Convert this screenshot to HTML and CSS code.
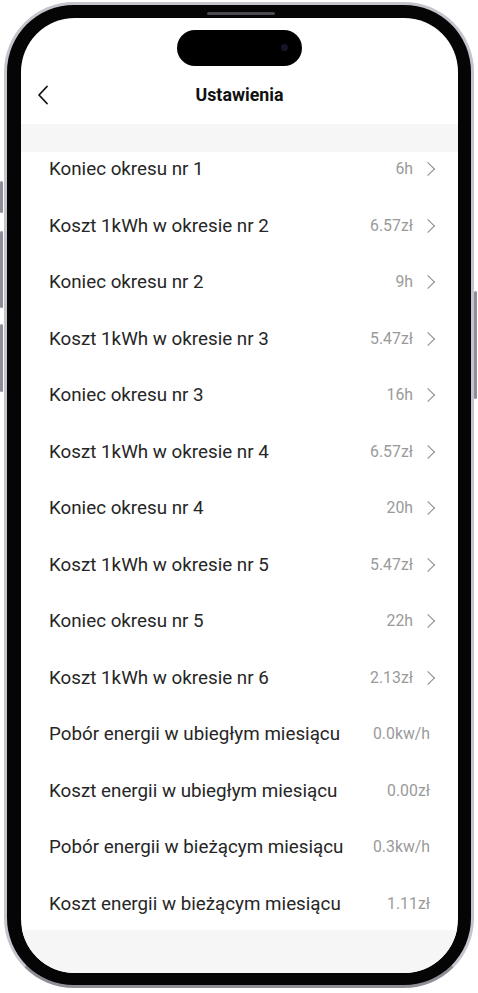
FILE: index.html
```html
<html>
<head>
  <meta name="viewport" content="width=device-width, initial-scale=1"/>
  <link rel="stylesheet" href="styles.css">
</head>
<body>
<div class="phone">
  <span class="btn btn-l1"></span>
  <span class="btn btn-l2"></span>
  <span class="btn btn-l3"></span>
  <span class="btn btn-r1"></span>
  <span class="speaker"></span>
  <div class="screen">
    <div class="top">
      <div class="island"><span class="cam"></span></div>
      <div class="nav">
        <svg class="back" width="12" height="20" viewBox="0 0 12 20">
          <path d="M10 1.5 L2 10 L10 18.5" fill="none" stroke="#111" stroke-width="1.8" stroke-linecap="round" stroke-linejoin="round"/>
        </svg>
        <h1>Ustawienia</h1>
      </div>
    </div>
    <div class="band"></div>
    <div class="list">
      <div class="row"><span class="label">Koniec okresu nr 1</span><span class="value">6h</span><span class="chev"></span></div>
      <div class="row"><span class="label">Koszt 1kWh w okresie nr 2</span><span class="value">6.57zł</span><span class="chev"></span></div>
      <div class="row"><span class="label">Koniec okresu nr 2</span><span class="value">9h</span><span class="chev"></span></div>
      <div class="row"><span class="label">Koszt 1kWh w okresie nr 3</span><span class="value">5.47zł</span><span class="chev"></span></div>
      <div class="row"><span class="label">Koniec okresu nr 3</span><span class="value">16h</span><span class="chev"></span></div>
      <div class="row"><span class="label">Koszt 1kWh w okresie nr 4</span><span class="value">6.57zł</span><span class="chev"></span></div>
      <div class="row"><span class="label">Koniec okresu nr 4</span><span class="value">20h</span><span class="chev"></span></div>
      <div class="row"><span class="label">Koszt 1kWh w okresie nr 5</span><span class="value">5.47zł</span><span class="chev"></span></div>
      <div class="row"><span class="label">Koniec okresu nr 5</span><span class="value">22h</span><span class="chev"></span></div>
      <div class="row"><span class="label">Koszt 1kWh w okresie nr 6</span><span class="value">2.13zł</span><span class="chev"></span></div>
      <div class="row"><span class="label">Pobór energii w ubiegłym miesiącu</span><span class="value plain">0.0kw/h</span></div>
      <div class="row"><span class="label">Koszt energii w ubiegłym miesiącu</span><span class="value plain">0.00zł</span></div>
      <div class="row"><span class="label">Pobór energii w bieżącym miesiącu</span><span class="value plain">0.3kw/h</span></div>
      <div class="row"><span class="label">Koszt energii w bieżącym miesiącu</span><span class="value plain">1.11zł</span></div>
    </div>
    <div class="footer"></div>
  </div>
</div>
</body>
</html>
```

FILE: styles.css
```css
body {
  margin: 0;
  background: #fff;
  font-family: 'Roboto', 'Noto Sans', sans-serif;
}

.phone {
  position: relative;
  box-sizing: border-box;
  width: 470px;
  height: 986px;
  margin: 2px 0 0 4px;
  padding: 13px 13px 12px 14px;
  background: #050505;
  border: 3px solid #c3c4cc;
  border-bottom-color: #8e8f96;
  border-radius: 70px;
}

/* side buttons and speaker sit on the frame */
.btn {
  position: absolute;
  width: 3px;
  background: #8d8e98;
  border-radius: 2px;
}
.btn-l1 { left: -7px; top: 176px; height: 32px; }
.btn-l2 { left: -7px; top: 226px; height: 77px; }
.btn-l3 { left: -7px; top: 319px; height: 68px; }
.btn-r1 { right: -6px; top: 286px; height: 108px; }

.speaker {
  position: absolute;
  top: 7px;
  left: 200px;
  width: 68px;
  height: 3px;
  border-radius: 2px;
  background: #4a4a4e;
}

.screen {
  display: flex;
  flex-direction: column;
  height: 100%;
  background: #fff;
  border-radius: 54px;
  overflow: hidden;
}

.top {
  height: 106px;
  display: flex;
  flex-direction: column;
  align-items: center;
}

.island {
  position: relative;
  margin-top: 12px;
  width: 125px;
  height: 36px;
  border-radius: 18px;
  background: #000;
}

.cam {
  position: absolute;
  right: 14px;
  top: 14px;
  width: 7px;
  height: 7px;
  border-radius: 50%;
  background: #15152a;
}

.nav {
  position: relative;
  width: 100%;
  flex: 1;
  display: flex;
  align-items: center;
  justify-content: center;
}

.back {
  position: absolute;
  left: 16px;
  top: 19px;
}

.nav h1 {
  margin: 0 0 2px 0;
  font-size: 17.8px;
  font-weight: 700;
  color: #111;
}

.band {
  height: 28px;
  background: #f6f6f6;
}

.list {
  height: 778px;
  overflow: hidden;
}

.row {
  display: flex;
  align-items: flex-start;
  height: 56.5px;
  box-sizing: border-box;
  padding: 6px 21px 0 28px;
  line-height: 22px;
}

.label {
  flex: 1;
  font-size: 18.8px;
  color: #262626;
}

.value {
  font-size: 15.8px;
  color: #9a9a9a;
}
.value.plain {
  margin-right: 7px;
}

.chev {
  width: 9px;
  height: 9px;
  margin: 6px 4px 0 10px;
  border-top: 1.4px solid #8a8a8a;
  border-right: 1.4px solid #8a8a8a;
  transform: rotate(45deg);
}

.footer {
  flex: 1;
  background: #f6f6f6;
}
```
